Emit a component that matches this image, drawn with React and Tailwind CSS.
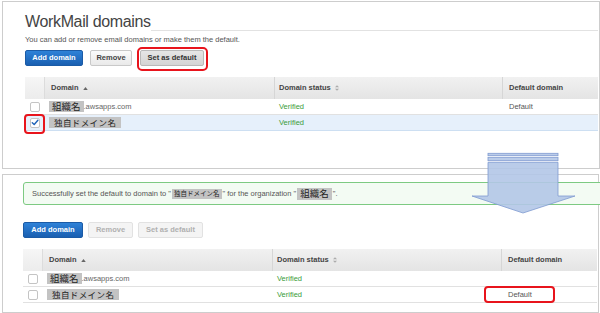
import React from "react";

const SANS = "font-['Liberation_Sans','Noto_Sans_CJK_JP',sans-serif]";

function Mark({ children, className = "" }) {
  return (
    <span
      className={`inline-flex items-center bg-[#c3c3c3] text-[#222] font-['Noto_Sans_CJK_JP',sans-serif] leading-none ${className}`}
    >
      {children}
    </span>
  );
}

function Checkbox({ checked }) {
  return (
    <span className="flex h-[10px] w-[10px] items-center justify-center rounded-[2px] border border-[#c4c4c4] bg-white">
      {checked && (
        <svg viewBox="0 0 10 10" className="h-[9px] w-[9px]">
          <path d="M1.6 5.2 L4 7.4 L8.6 2.2" fill="none" stroke="#1f63b8" strokeWidth="1.8" strokeLinecap="round" strokeLinejoin="round" />
        </svg>
      )}
    </span>
  );
}

function SortUp() {
  return (
    <svg viewBox="0 0 6 4" className="ml-[4px] h-[3px] w-[5px]">
      <path d="M0 4 L3 0 L6 4 Z" fill="#666" />
    </svg>
  );
}

function SortBoth() {
  return (
    <svg viewBox="0 0 6 8" className="ml-[4px] h-[6px] w-[4px]">
      <path d="M0 3 L3 0 L6 3 Z M0 5 L3 8 L6 5 Z" fill="#aaa" />
    </svg>
  );
}

function Button({ kind, children, className = "" }) {
  const styles = {
    primary: "border-[#1b5ba6] bg-gradient-to-b from-[#2f82d8] to-[#1a5fb1] text-white",
    normal: "border-[#c9c9c9] bg-gradient-to-b from-[#fbfbfb] to-[#e9e9e9] text-[#444]",
    pressed: "border-[#b9b9b9] bg-gradient-to-b from-[#e6e6e6] to-[#d4d4d4] text-[#333]",
    disabled: "border-[#e2e2e2] bg-[#f4f4f4] text-[#b0b0b0]",
  };
  return (
    <span
      className={`flex h-[16px] items-center justify-center rounded-[2px] border text-[7.5px] font-bold leading-none ${styles[kind]} ${className}`}
    >
      {children}
    </span>
  );
}

function DomainTable({ rows, cols }) {
  return (
    <div className="w-full">
      <div className={`grid h-[22px] ${cols} text-[7.5px] font-bold leading-none text-[#444]`}>
        <div className="border-r border-[#dcdcdc] bg-gradient-to-b from-[#f6f6f6] to-[#ececec]" />
        <div className="flex items-center border-r border-[#d6d6d6] bg-gradient-to-b from-[#f1f1f1] to-[#e4e4e4] pl-[6px]">
          Domain
          <SortUp />
        </div>
        <div className="flex items-center border-r border-[#d6d6d6] bg-gradient-to-b from-[#f1f1f1] to-[#e4e4e4] pl-[4px]">
          Domain status
          <SortBoth />
        </div>
        <div className="flex items-center bg-gradient-to-b from-[#f1f1f1] to-[#e4e4e4] pl-[6px]">
          Default domain
        </div>
      </div>
      {rows.map((row) => (
        <div
          key={row.key}
          className={`grid h-[16px] ${cols} border-b text-[7.5px] leading-none ${
            row.selected ? "border-[#cddff2] bg-[#e6f0fb]" : "border-[#e1e1e1] bg-white"
          }`}
        >
          <div className="relative flex items-center justify-center">
            <Checkbox checked={row.selected} />
            {row.ringCheck && (
              <span className="absolute left-[-1px] top-[-1px] h-[20px] w-[21px] rounded-[4px] border-2 border-[#e8141c]" />
            )}
          </div>
          <div className="flex items-center pl-[4px] text-[#666]">{row.domain}</div>
          <div className="flex items-center pl-[4px] text-[#3a9c3a]">Verified</div>
          <div className="relative flex items-center pl-[6px] text-[#555]">
            {row.ringDefault && (
              <span className="absolute left-[-18px] top-[-1px] h-[17px] w-[71px] rounded-[4px] border-2 border-[#e8141c]" />
            )}
            {row.isDefault ? "Default" : ""}
          </div>
        </div>
      ))}
    </div>
  );
}

function Arrow() {
  return (
    <svg viewBox="0 0 108 66" className="pointer-events-none absolute left-[470px] top-[150px] h-[66px] w-[108px]">
      <g fill="#b3c6e7" fillOpacity="0.9" stroke="#7f9bd0" strokeWidth="0.8">
        <rect x="18" y="3.3" width="70" height="2.4" />
        <rect x="18" y="7.3" width="70" height="3.4" />
        <path d="M18 12.3 H88 V46 H105 L53 63 L2 46 H18 Z" />
      </g>
    </svg>
  );
}

export default function App() {
  const orgName = <Mark className="h-[11px] px-[3px] text-[9.5px]">組織名</Mark>;
  const ownDomain = <Mark className="h-[11px] px-[5px] text-[8.5px] tracking-[0.4px]">独自ドメイン名</Mark>;

  return (
    <div className={`relative h-[313px] w-[600px] overflow-hidden bg-white ${SANS}`}>
      {/* before */}
      <section className="ml-[2px] mt-[1px] flex h-[168px] w-[598px] flex-col border border-[#cdcdcd] pl-[22px] pr-[1px] pt-[11px]">
        <div className="flex items-end">
          <h1 className="text-[16px] leading-[18px] tracking-[-0.35px] text-[#444]">WorkMail domains</h1>
          <div className="mb-[0px] h-px flex-1 bg-[#e2e2e2]" />
        </div>
        <p className="mt-[4px] text-[7.5px] leading-[10px] text-[#555]">
          You can add or remove email domains or make them the default.
        </p>
        <div className="mt-[5px] flex">
          <Button kind="primary" className="w-[58px]">Add domain</Button>
          <Button kind="normal" className="ml-[7px] w-[42px]">Remove</Button>
          <span className="relative ml-[8px]">
            <Button kind="pressed" className="w-[64px]">Set as default</Button>
            <span className="absolute left-[-3px] top-[-3px] h-[24px] w-[71px] rounded-[5px] border-2 border-[#e8141c]" />
          </span>
        </div>
        <div className="mt-[11px]">
          <DomainTable
            cols="grid-cols-[20px_230px_228px_1fr]"
            rows={[
              { key: "org", domain: <>{orgName}<span>.awsapps.com</span></>, isDefault: true },
              { key: "own", domain: ownDomain, selected: true, ringCheck: true },
            ]}
          />
        </div>
      </section>

      {/* after */}
      <section className="ml-[2px] mt-[5px] flex h-[139px] w-[597px] flex-col border border-[#cdcdcd] pl-[20px] pt-[7px]">
        <div className="flex h-[23px] w-[590px] shrink-0 items-center rounded-l-[3px] border border-[#7dca82] bg-[#f3fbf3] pl-[8px] text-[7.5px] leading-none text-[#555]">
          Successfully set the default to domain to "
          <Mark className="mx-[1px] h-[10px] px-[2px] text-[6.5px]">独自ドメイン名</Mark>
          " for the organization "
          <Mark className="mx-[1px] h-[12px] px-[3px] text-[9.5px]">組織名</Mark>
          ".
        </div>
        <div className="mt-[17px] flex">
          <Button kind="primary" className="w-[60px]">Add domain</Button>
          <Button kind="disabled" className="ml-[5px] w-[45px]">Remove</Button>
          <Button kind="disabled" className="ml-[5px] w-[65px]">Set as default</Button>
        </div>
        <div className="mt-[11px] pr-[1px]">
          <DomainTable
            cols="grid-cols-[20px_230px_229px_1fr]"
            rows={[
              { key: "org", domain: <>{orgName}<span>.awsapps.com</span></> },
              { key: "own", domain: ownDomain, isDefault: true, ringDefault: true },
            ]}
          />
        </div>
      </section>

      <Arrow />
    </div>
  );
}
